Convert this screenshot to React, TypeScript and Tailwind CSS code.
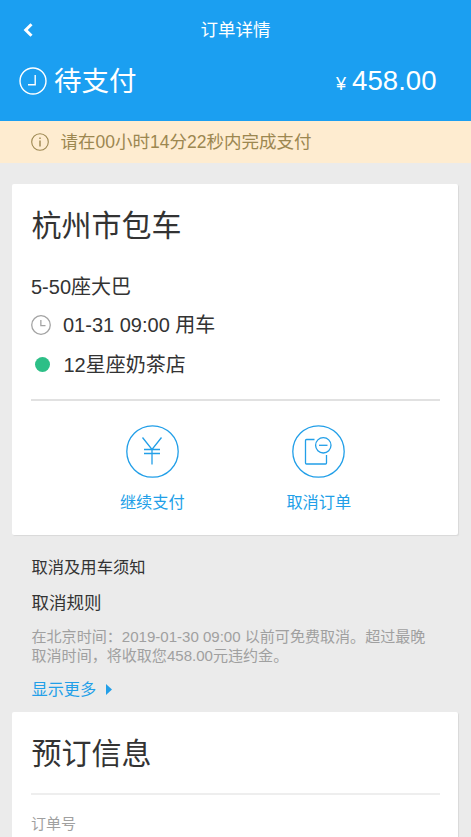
import React from "react";

function Clock({ size, arms, color, stroke }: { size: number; arms: string; color: string; stroke: number }) {
  return (
    <svg width={size} height={size} viewBox="0 0 28 28" fill="none" stroke={color} strokeWidth={stroke} className="shrink-0">
      <circle cx="14" cy="14" r="13" />
      <path d={arms} />
    </svg>
  );
}

function Action({ label, children }: { label: string; children: React.ReactNode }) {
  return (
    <button className="flex w-[166.500px] flex-col items-center text-[#229fe8]">
      <svg width="53" height="53" viewBox="0 0 53 53" fill="none" stroke="currentColor" strokeWidth="1.3">
        <circle cx="26.500" cy="26.500" r="25.700" />
        {children}
      </svg>
      <span className="mt-3 h-6 text-[16.2px] leading-6">{label}</span>
    </button>
  );
}

export default function App() {
  return (
    <div className="h-[837px] w-[471px] overflow-hidden bg-[#ebebeb] font-['Liberation_Sans','Noto_Sans_CJK_SC',sans-serif] text-[#333] whitespace-nowrap">
      <header className="h-[121px] bg-[#1b9ff1] text-white">
        <div className="grid h-[60px] grid-cols-3 items-center">
          <svg width="10" height="14" viewBox="0 0 10 14" fill="none" stroke="white" strokeWidth="3" className="ml-[23px]">
            <path d="M8.5 1.2 2.7 7l5.8 5.8" />
          </svg>
          <h1 className="text-center text-[17.5px] leading-6">订单详情</h1>
        </div>
        <div className="flex h-[42px] items-center pl-[19px] pr-[34.500px]">
          <Clock size={28} arms="M16.2 8v9.7H9" color="white" stroke={1.4} />
          <span className="ml-[7px] pt-px text-[27.5px] leading-10">待支付</span>
          <span className="ml-auto flex items-baseline pt-[2px] leading-10">
            <span className="mr-[6px] text-[18px]">¥</span>
            <span className="text-[27.6px]">458.00</span>
          </span>
        </div>
      </header>

      <div className="flex h-[42px] items-center bg-[#feecd0] pl-[31px] text-[17.5px] leading-6 text-[#9c8750]">
        <svg width="18" height="18" viewBox="0 0 18 18" fill="none" stroke="currentColor" strokeWidth="1.1">
          <circle cx="9" cy="9" r="8.3" />
          <path d="M9 7.4v6.2M9 4.4v1.7" strokeWidth="1.4" />
        </svg>
        <span className="ml-[11.500px]">请在00小时14分22秒内完成支付</span>
      </div>

      <section className="ml-3 mt-[21px] mr-[13px] h-[351px] rounded-[2px] bg-white pl-5 pr-[18px] shadow-[1px_1px_1px_#d9d9d9]">
        <h2 className="-ml-[0.500px] pt-[22px] text-[30px] leading-10">杭州市包车</h2>
        <p className="mt-[26px] -ml-px text-[20px] leading-[30px]">5-50座大巴</p>
        <div className="-ml-px mt-2 flex h-[30px] items-center text-[20px]">
          <Clock size={20} arms="M13.8 7v8h6.5" color="#a3a3a3" stroke={1.8} />
          <span className="ml-3 leading-[30px]">01-31 09:00 用车</span>
        </div>
        <div className="mt-[9px] flex h-[30px] items-center pl-[3px] text-[20px]">
          <span className="h-[15px] w-[15px] rounded-full bg-[#2dbf87]" />
          <span className="ml-[13.500px] pt-px leading-[30px]">12星座奶茶店</span>
        </div>
        <div className="-ml-px mt-5 h-[2px] bg-[#e1e1e1]" />
        <div className="mt-6 flex pl-[37px]">
          <Action label="继续支付">
            <path d="m16.500 12.500 9.500 12 9.500-12M26 24.500v15M18 24.500h16M18 28.500h16" />
          </Action>
          <Action label="取消订单">
            <path d="M22.500 14.500h-8q-1 0-1 1v22.500q0 1 1 1h19q1 0 1-1v-8" />
            <circle cx="31.300" cy="20.300" r="7.700" />
            <path d="M27 20.300h8.500" />
          </Action>
        </div>
      </section>

      <section className="pl-[31.500px] pt-5">
        <h3 className="text-[16.3px] leading-6">取消及用车须知</h3>
        <h3 className="mt-3 text-[17.5px] leading-6">取消规则</h3>
        <p className="mt-3 text-[15.050px] leading-[19px] text-[#a0a0a0]">
          在北京时间：2019-01-30 09:00 以前可免费取消。超过最晚
          <br />
          取消时间，将收取您458.00元违约金。
        </p>
        <div className="mt-3 flex h-6 items-center text-[16.2px] leading-6 text-[#229fe8]">
          显示更多
          <svg width="6" height="11" viewBox="0 0 6 11" fill="currentColor" className="ml-[10px]">
            <path d="M0 0v11l6-5.500z" />
          </svg>
        </div>
      </section>

      <section className="ml-3 mr-[13px] mt-[11px] h-[160px] rounded-[2px] bg-white pl-5 pr-[18px] shadow-[1px_1px_1px_#d9d9d9]">
        <h2 className="-ml-[0.500px] pt-[22px] text-[30px] leading-10">预订信息</h2>
        <div className="-ml-px mt-[19px] h-[2px] bg-[#eeeeee]" />
        <p className="-ml-px mt-[17px] text-[15px] leading-6 text-[#a0a0a0]">订单号</p>
      </section>
    </div>
  );
}
